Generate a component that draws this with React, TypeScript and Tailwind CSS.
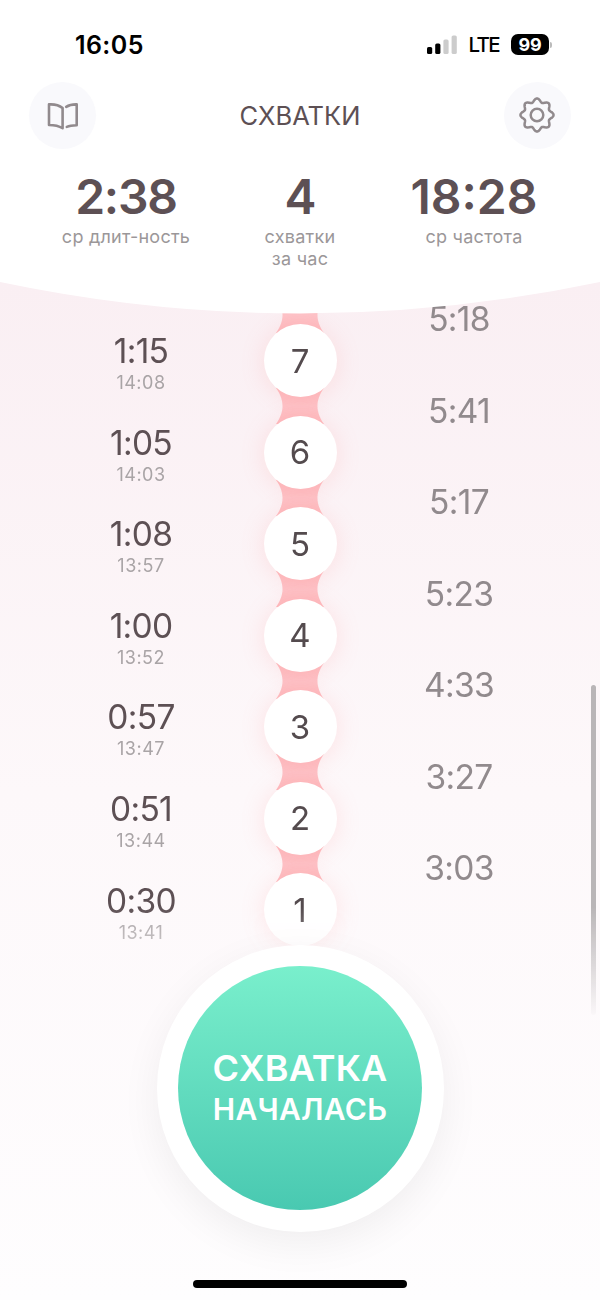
import React from "react";

type Contraction = {
  id: number;
  duration: string;
  time: string;
};

const contractions: Contraction[] = [
  { id: 7, duration: "1:15", time: "14:08" },
  { id: 6, duration: "1:05", time: "14:03" },
  { id: 5, duration: "1:08", time: "13:57" },
  { id: 4, duration: "1:00", time: "13:52" },
  { id: 3, duration: "0:57", time: "13:47" },
  { id: 2, duration: "0:51", time: "13:44" },
  { id: 1, duration: "0:30", time: "13:41" },
];

const intervals = ["5:18", "5:41", "5:17", "5:23", "4:33", "3:27", "3:03"];

// eight soft teeth around a 36x36 box
const gearPath = () => {
  const points: string[] = [];
  for (let i = 0; i < 160; i++) {
    const angle = (i / 160) * Math.PI * 2;
    const r = 14.8 + 1.75 * Math.cos(angle * 8);
    points.push(
      `${(18 + r * Math.sin(angle)).toFixed(2)} ${(18 - r * Math.cos(angle)).toFixed(2)}`
    );
  }
  return `M${points.join("L")}Z`;
};

const BookIcon = () => (
  <svg
    width="34"
    height="30"
    viewBox="0 0 34 30"
    fill="none"
    stroke="#918a8d"
    strokeWidth="2.6"
    strokeLinecap="round"
    strokeLinejoin="round"
  >
    <path d="M3 3.4C8 3.1 13 4.1 16.600 7.100V27.200C13 25 8 24 3 24Z" />
    <path d="M20.200 5.900C23.200 3.900 26.600 3.300 30.700 3.400V24.300C27 24.400 23.800 24.600 20.800 25.900" />
  </svg>
);

const GearIcon = () => (
  <svg
    width="36"
    height="36"
    viewBox="0 0 36 36"
    fill="none"
    stroke="#918a8d"
    strokeWidth="2.5"
    strokeLinejoin="round"
    className="-mt-px mr-px"
  >
    <path d={gearPath()} />
    <circle cx="18" cy="18" r="6.3" />
  </svg>
);

const StatusBar = () => (
  <div className="flex h-[82px] items-start justify-between pl-[75px] pr-[48px] text-black">
    <span className="mt-[30px] text-[25px] leading-[30px] font-semibold tracking-[0.4px]">
      16:05
    </span>
    <div className="mt-[34px] flex h-[21px] items-center">
      <svg width="30" height="19" viewBox="0 0 30 19" className="mr-[11px]">
        <rect x="0" y="12" width="5.2" height="7" rx="1.6" fill="#000" />
        <rect x="8.2" y="8.5" width="5.2" height="10.5" rx="1.6" fill="#000" />
        <rect x="16.4" y="4.5" width="5.2" height="14.5" rx="1.6" fill="#ccc" />
        <rect x="24.6" y="0.5" width="5.2" height="18.5" rx="1.6" fill="#ccc" />
      </svg>
      <span className="mr-[12px] text-[20.5px] leading-[21px] font-medium tracking-[-1.6px]">
        LTE
      </span>
      <span className="flex h-[21px] w-[38px] items-center justify-center rounded-[7px] bg-black text-[18px] font-bold tracking-[-0.3px] text-white">
        99
      </span>
      <span className="ml-[1px] h-[6px] w-[2px] rounded-r-full bg-[#bbb]" />
    </div>
  </div>
);

const Stat = ({ value, label }: { value: string; label: string }) => (
  <div className="flex w-[174px] flex-col items-center">
    <span
      className={`text-[48px] leading-[54px] font-semibold text-[#5d5054] ${
        value.length < 5 ? "tracking-[-1.2px]" : ""
      }`}
    >
      {value}
    </span>
    <span className="mt-[2px] text-center text-[18px] leading-[21.5px] tracking-[0.25px] whitespace-pre-line text-[#9b9799]">
      {label}
    </span>
  </div>
);

const Connector = () => (
  <svg
    width="48"
    height="36"
    viewBox="0 0 48 36"
    className="-my-[8.75px] shrink-0"
  >
    <defs>
      <linearGradient id="link" x1="0" y1="0" x2="0" y2="1">
        <stop offset="0" stopColor="#fdb9bd" />
        <stop offset="0.5" stopColor="#fdc3c8" />
        <stop offset="1" stopColor="#fdb9bd" />
      </linearGradient>
    </defs>
    <path
      d="M0 0C5 7 6.500 13 6.500 18S5 29 0 36H48C43 29 41.500 23 41.500 18S43 7 48 0Z"
      fill="url(#link)"
    />
  </svg>
);

const App = () => {
  return (
    <div className="flex h-[1300px] w-[600px] flex-col overflow-hidden bg-white font-['Inter','Liberation_Sans',sans-serif]">
      <header className="relative z-10 h-[282px] shrink-0 bg-white">
        <StatusBar />
        <div className="flex h-[67px] items-center justify-between px-[29px]">
          <button className="flex size-[67px] items-center justify-center rounded-full bg-[#f9f9fc]">
            <BookIcon />
          </button>
          <h1 className="text-[25.5px] leading-[30px] text-[#5d5054]">
            СХВАТКИ
          </h1>
          <button className="flex size-[67px] items-center justify-center rounded-full bg-[#f9f9fc]">
            <GearIcon />
          </button>
        </div>
        <div className="flex justify-center pt-[21px]">
          <Stat value="2:38" label="ср длит-ность" />
          <Stat value="4" label={"схватки\nза час"} />
          <Stat value="18:28" label="ср частота" />
        </div>
        {/* curved bottom edge over the list */}
        <svg
          className="absolute top-full left-0"
          width="600"
          height="33"
          viewBox="0 0 600 33"
        >
          <path d="M0 -1V0Q150 31.500 300 31.500T600 0V-1Z" fill="#fff" />
        </svg>
      </header>

      <main className="flex flex-1 flex-col items-center bg-linear-to-b from-[#faeff3] via-[#fdf8fa] via-50% to-[#fefdfe]">
        <div className="relative -mb-[75.5px] flex h-[738px] w-full shrink-0 mask-[linear-gradient(to_bottom,#000_625px,transparent_738px)]">
          <div className="flex w-[282px] flex-col pt-[50px] text-center">
            {contractions.map(({ id, duration, time }) => (
              <div key={id} className="flex h-[91.6px] shrink-0 flex-col">
                <span className="text-[33.5px] leading-[38px] tracking-[-0.7px] text-[#5d5054]">
                  {duration}
                </span>
                <span className="mt-[2px] text-[18px] leading-[21px] tracking-[0.5px] text-[#a9a4a6]">
                  {time}
                </span>
              </div>
            ))}
          </div>

          <div className="flex w-[36px] flex-col items-center pt-[23.5px]">
            {contractions.map(({ id }) => (
              <React.Fragment key={id}>
                <Connector />
                <div className="relative flex size-[73px] shrink-0 items-center justify-center rounded-full bg-white pt-[2px] text-[33px] text-[#544b4e] shadow-[0_2px_24px_rgba(255,140,140,0.2)]">
                  {id}
                </div>
              </React.Fragment>
            ))}
          </div>

          <div className="flex w-[282px] flex-col pt-[18px] text-center">
            {intervals.map((interval) => (
              <span
                key={interval}
                className="h-[91.5px] shrink-0 text-[33.5px] leading-[38px] tracking-[-0.7px] text-[#918a8d]"
              >
                {interval}
              </span>
            ))}
          </div>

          <div className="absolute top-[403px] right-[4px] h-[330px] w-[5px] rounded-full bg-[#b9b5b7]" />
        </div>

        <button className="relative flex size-[287px] shrink-0 items-center justify-center rounded-full bg-white shadow-[0_12px_40px_rgba(0,0,0,0.06)]">
          <span className="flex size-[244px] flex-col items-center justify-center rounded-full bg-linear-to-b from-[#79efcc] to-[#49c9b1] font-semibold text-white">
            <span className="text-[36px] leading-[42px] tracking-[0.1px]">
              СХВАТКА
            </span>
            <span className="text-[30px] leading-[40px] tracking-[0.3px]">
              НАЧАЛАСЬ
            </span>
          </span>
        </button>

        <div className="mt-[48.5px] h-[8px] w-[214px] shrink-0 rounded-full bg-black" />
      </main>
    </div>
  );
};

export default App;
